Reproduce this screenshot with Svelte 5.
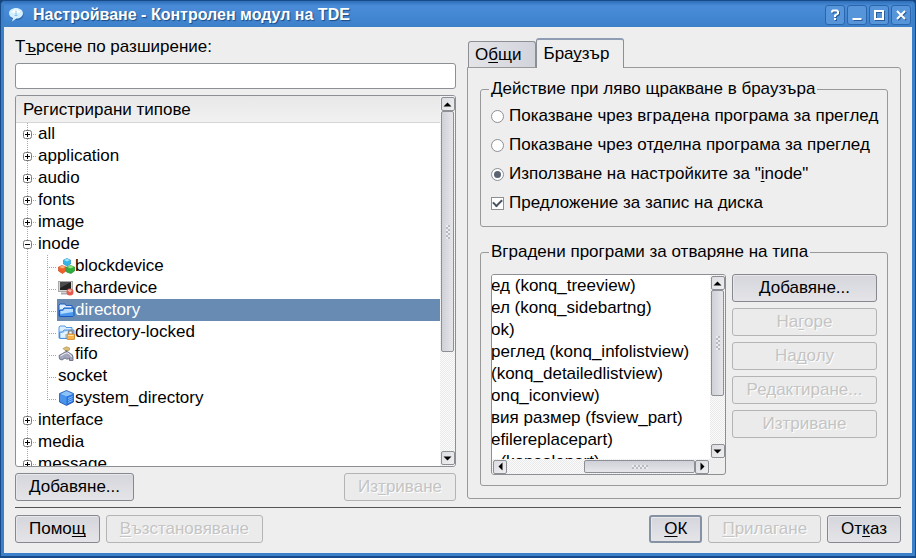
<script>
let search = $state('');
let clickAction = $state('settings');
let askSave = $state(true);
let tab = $state('browser');
let selected = $state('directory');

let groups = $state([
  { name: 'all' },
  { name: 'application' },
  { name: 'audio' },
  { name: 'fonts' },
  { name: 'image' },
  {
    name: 'inode',
    open: true,
    children: [
      { name: 'blockdevice', icon: 'blocks' },
      { name: 'chardevice', icon: 'terminal' },
      { name: 'directory', icon: 'folder' },
      { name: 'directory-locked', icon: 'locked' },
      { name: 'fifo', icon: 'tap' },
      { name: 'socket' },
      { name: 'system_directory', icon: 'cube' }
    ]
  },
  { name: 'interface' },
  { name: 'media' },
  { name: 'message' }
]);

// labels as they read once scrolled to the right
const services = [
  'ед (konq_treeview)',
  'ел (konq_sidebartng)',
  'ok)',
  'реглед (konq_infolistview)',
  '(konq_detailedlistview)',
  'onq_iconview)',
  'вия размер (fsview_part)',
  'efilereplacepart)',
  '  (konsolepart)'
];
</script>

{#snippet icon(name)}
  <svg class="icon" width="17" height="16" viewBox="0 0 17 16" aria-hidden="true">
    {#if name === 'blocks'}
      <path d="M5.500 2 9 .5l3.500 1.500v4L9 8 5.500 6z" fill="#35b5e5" stroke="#1c86b8" stroke-width=".6" />
      <path d="M6 2l3-1.200L12 2 9 3.500z" fill="#9be6fa" />
      <path d="M.5 9 4 7.500 8 9v4l-3.500 2.500L.5 13z" fill="#f0612a" stroke="#c23c12" stroke-width=".6" />
      <path d="M1 9l3.500-1.500L7.500 9 4.500 10.500z" fill="#ffae7a" />
      <path d="M8.500 9l4-1.500L16.500 9v4L13 15.500 8.500 14z" fill="#2fae3c" stroke="#158024" stroke-width=".6" />
      <path d="M9 9l3.500-1.500L16 9l-3.500 1.500z" fill="#8ce27f" />
    {:else if name === 'terminal'}
      <rect x=".5" y="1.500" width="14" height="10" fill="#d6d6d6" stroke="#aaa" />
      <rect x="2" y="2" width="11" height="8" fill="#222" />
      <path d="M2 2h11L2 8z" fill="#4b4b4b" />
      <path d="M3 13.500h7" stroke="#aaa" stroke-width="2" />
      <circle cx="12" cy="12" r="3.500" fill="#e45c4c" />
      <path d="M9.500 10.500q2-2 4.500 0l-2 2z" fill="#f8b4a8" />
    {:else if name === 'folder'}
      <path d="M1 14V3l1-1h5l1 1.500h6V7" fill="#dbeeff" stroke="#1e5fc8" />
      <path d="M1.500 14.500V8h3l1.500-2h10v7.500l-1 1z" fill="#4c98ee" stroke="#1558c0" />
      <path d="M2.500 9H5l1.500-2H15v3L2.500 12z" fill="#b5dbff" />
    {:else if name === 'locked'}
      <path d="M1 14V3l1-1h5l1 1.500h6V7" fill="#dbeeff" stroke="#5598e0" />
      <path d="M1.500 14.500V8h3l1.500-2h10v8.500z" fill="#a9d2fa" stroke="#4a90dc" />
      <path d="M3 9h2.500L7 7.500h7V10H7v3.500H3z" fill="#e5f3ff" />
      <path d="M10.500 10V8.500a2 2 0 0 1 4 0V10" fill="none" stroke="#8c8c8c" stroke-width="1.500" />
      <rect x="9" y="10" width="7.500" height="5.500" rx=".5" fill="#f7b34c" stroke="#c67b18" stroke-width=".7" />
      <path d="M10 11.500h5.500" stroke="#ffe2a8" />
    {:else if name === 'tap'}
      <path d="M5 2.500 8.500.8 11.500 2v2L9 5 7 4.500z" fill="#d9bd78" stroke="#a5873c" stroke-width=".6" />
      <path d="M8.500 4v3" stroke="#8e8570" stroke-width="2" />
      <path d="M1 9.500 4.500 7.500 7 6h3.500l1.500 1.500q3 .5 3 3.500v3.500h-3.500V12q-1 1.500-3 1L7 12l-3 2-2.500-1z" fill="#a3a7bc" stroke="#5d6178" stroke-width=".8" />
      <path d="M2.500 10l3.500-2 2-1h2l1.500 1.500q2 .5 2 2.500" fill="none" stroke="#f2f2fa" />
    {:else if name === 'cube'}
      <path d="M8.500.5l7 3v8.500l-7 3.500L1.500 12V3.500z" fill="#2873dc" stroke="#174e9f" stroke-width=".7" />
      <path d="M8.500 1l6.500 3-6.500 2.500L2 4z" fill="#8cc4fa" />
      <path d="M2 4l6.500 2.500V15L2 11.500z" fill="#4a94ec" />
      <path d="M10 8.500l4.500-2M10 10.500l4.500-2M10 12.500l4.500-2" stroke="#a4d5ff" stroke-width=".8" />
    {/if}
  </svg>
{/snippet}

{#snippet arrow(dir)}
  <button class="arrow" type="button" aria-label={dir} tabindex="-1">
    <svg width="9" height="9" viewBox="0 0 9 9" aria-hidden="true">
      {#if dir === 'up'}
        <path d="M.5 6.500 4.500 2.500 8.500 6.500z" />
      {:else if dir === 'down'}
        <path d="M.5 2.500 4.500 6.500 8.500 2.500z" />
      {:else if dir === 'left'}
        <path d="M6.500.5 2.500 4.500 6.500 8.500z" />
      {:else}
        <path d="M2.500.5 6.500 4.500 2.500 8.500z" />
      {/if}
    </svg>
  </button>
{/snippet}

<div class="window">
  <header class="titlebar">
    <svg class="logo" width="16" height="16" viewBox="0 0 16 16" aria-hidden="true">
      <ellipse cx="8.500" cy="7.500" rx="7" ry="5.500" fill="#17458a" opacity=".5" />
      <path d="M8 1c4 0 7 2.300 7 5.200S12 11.500 8.500 11.500L4 14.500 5 11C2.500 10.300 1 8.500 1 6.200 1 3.300 4 1 8 1z" fill="#d4efff" />
      <path d="M3 5q5-5 10 0-5 2-10 0z" fill="#fff" />
      <path d="M8 3.500v5M6.500 8.500h3" stroke="#8ac0e8" />
    </svg>
    <h1>Настройване - Контролен модул на TDE</h1>
    <div class="window-buttons">
      <button type="button" aria-label="Помощ">
        <svg width="18" height="18" viewBox="0 0 18 18"><path d="M6 6.500V5.500L7 4.500h4l1 1v2L9 9.500V11M9 12v2" /></svg>
      </button>
      <button type="button" aria-label="Минимизиране">
        <svg width="18" height="18" viewBox="0 0 18 18"><path d="M4.500 13h9" /></svg>
      </button>
      <button type="button" aria-label="Максимизиране">
        <svg width="18" height="18" viewBox="0 0 18 18"><path d="M5 5h8v8H5z" /></svg>
      </button>
      <button type="button" aria-label="Затваряне">
        <svg width="18" height="18" viewBox="0 0 18 18"><path d="M5 5l8 8M13 5l-8 8" /></svg>
      </button>
    </div>
  </header>

  <main>
    <div class="columns">
      <section class="types">
        <label for="search">Т<u>ъ</u>рсене по разширение:</label>
        <input id="search" class="search" type="text" bind:value={search} />

        <div class="frame">
          <div class="tree">
            <div class="tree-header">Регистрирани типове</div>
            <ul class="tree-list">
              {#each groups as group}
                <li>
                  <div class="row">
                    <button
                      class="expander"
                      type="button"
                      aria-label={group.name}
                      aria-expanded={!!group.open}
                      onclick={() => (group.open = !group.open)}
                    >
                      <svg width="9" height="9" viewBox="0 0 9 9" aria-hidden="true">
                        <rect x=".5" y=".5" width="8" height="8" rx="2" fill="#fff" stroke="#777" />
                        <path d={group.open ? 'M2 4.500h5' : 'M2 4.500h5M4.500 2v5'} stroke="#000" />
                      </svg>
                    </button>
                    <span>{group.name}</span>
                  </div>
                  {#if group.open && group.children}
                    <ul class="children">
                      {#each group.children as item}
                        <li>
                          <button
                            class="item"
                            class:selected={selected === item.name}
                            type="button"
                            onclick={() => (selected = item.name)}
                          >
                            {#if item.icon}{@render icon(item.icon)}{/if}
                            <span>{item.name}</span>
                          </button>
                        </li>
                      {/each}
                    </ul>
                  {/if}
                </li>
              {/each}
            </ul>
          </div>
          <div class="scroll vertical">
            {@render arrow('up')}
            <div class="track"><div class="thumb long"></div></div>
            {@render arrow('down')}
          </div>
        </div>

        <div class="buttons">
          <button class="btn" type="button">Добавяне...</button>
          <button class="btn end" type="button" disabled>Из<u>т</u>риване</button>
        </div>
      </section>

      <section class="details">
        <div class="tabs" role="tablist">
          <button class="tab" class:active={tab === 'general'} role="tab" aria-selected={tab === 'general'} onclick={() => (tab = 'general')}>О<u>б</u>щи</button>
          <button class="tab" class:active={tab === 'browser'} role="tab" aria-selected={tab === 'browser'} onclick={() => (tab = 'browser')}>Бра<u>у</u>зър</button>
        </div>
        <div class="panel" role="tabpanel">
          <fieldset class="actions">
            <legend>Действие при ляво щракване в браузъра</legend>
            <label><input type="radio" name="action" value="embedded" bind:group={clickAction} />Показване чрез вградена програма за преглед</label>
            <label><input type="radio" name="action" value="separate" bind:group={clickAction} />Показване чрез отделна програма за преглед</label>
            <label><input type="radio" name="action" value="settings" bind:group={clickAction} /><span>Използване на настройките за "<u>i</u>node"</span></label>
            <label><input type="checkbox" bind:checked={askSave} />Предложение за запис на диска</label>
          </fieldset>

          <fieldset class="services">
            <legend>Вградени програми за отваряне на типа</legend>
            <div class="services-body">
              <div class="frame list-frame">
                <ul class="service-list">
                  {#each services as service}
                    <li>{service}</li>
                  {/each}
                </ul>
                <div class="scroll vertical">
                  {@render arrow('up')}
                  <div class="track"><div class="thumb high"></div></div>
                  {@render arrow('down')}
                </div>
                <div class="scroll horizontal">
                  {@render arrow('left')}
                  <div class="track"><div class="thumb wide"></div></div>
                  {@render arrow('right')}
                </div>
              </div>
              <div class="side-buttons">
                <button class="btn" type="button">Добавяне...</button>
                <button class="btn" type="button" disabled>На<u>г</u>оре</button>
                <button class="btn" type="button" disabled>На<u>д</u>олу</button>
                <button class="btn" type="button" disabled>Редактиране...</button>
                <button class="btn" type="button" disabled>Изтриване</button>
              </div>
            </div>
          </fieldset>
        </div>
      </section>
    </div>

    <footer class="buttons">
      <button class="btn" type="button">Помо<u>щ</u></button>
      <button class="btn" type="button" disabled><u>В</u>ъзстановяване</button>
      <button class="btn default end" type="button"><u>О</u>К</button>
      <button class="btn" type="button" disabled><u>П</u>рилагане</button>
      <button class="btn" type="button">От<u>к</u>аз</button>
    </footer>
  </main>
</div>

<style>
:global(body) {
  margin: 0;
  background: #17447c;
}
* {
  box-sizing: border-box;
}
.window {
  display: flex;
  flex-direction: column;
  height: 100vh;
  min-height: 480px;
  padding: 0 3px;
  border: 1px solid #174a88;
  border-bottom-width: 2px;
  border-radius: 5px 5px 0 0;
  background: #3c80ca;
  color: #000;
  font: 17px/20px "Liberation Sans", Arial, sans-serif;
}
button,
input {
  font: inherit;
  color: inherit;
  margin: 0;
}
ul {
  list-style: none;
  margin: 0;
  padding: 0;
}
u {
  text-underline-offset: 2px;
  text-decoration-thickness: 1px;
  text-decoration-skip-ink: none;
}

/* title bar */
.titlebar {
  display: flex;
  align-items: center;
  flex: none;
  height: 26px;
  padding: 2px 1px 0 4px;
  background: linear-gradient(#2f6fb9, #4a8cd8 5px, #3c80ca);
}
.logo {
  flex: none;
}
h1 {
  flex: 1;
  margin: 0 0 0 9px;
  color: #fff;
  font-size: 16px;
  line-height: 20px;
  white-space: nowrap;
  text-shadow: 1px 1px 1px #1c4a80;
}
.window-buttons {
  display: flex;
  gap: 2px;
}
.window-buttons button {
  width: 20px;
  height: 20px;
  padding: 0;
  border: 1px solid #2b66ac;
  border-radius: 3px;
  background: #5695da;
}
.window-buttons svg {
  display: block;
  fill: none;
  stroke: #fff;
  stroke-width: 2;
  filter: drop-shadow(1px 1px 0 #2a5c98);
}

main {
  display: flex;
  flex-direction: column;
  flex: 1;
  min-height: 0;
  padding: 10px 11px;
  margin-bottom: 3px;
  background: #eee;
}
.columns {
  display: flex;
  flex: 1;
  gap: 11px;
  min-height: 0;
  padding-bottom: 6px;
  border-bottom: 1px solid #555;
}

/* left column */
.types {
  display: flex;
  flex-direction: column;
  flex: 441;
  gap: 6px;
  min-width: 0;
}
.search {
  width: 100%;
  height: 26px;
  padding: 2px 4px;
  border: 1px solid #8c8f94;
  border-radius: 3px;
  background: #fff;
}
.frame {
  display: flex;
  flex: 1;
  min-height: 0;
  min-width: 0;
  border: 1px solid #8c8f94;
  border-radius: 3px;
  background: #fff;
  overflow: hidden;
}
.tree {
  flex: 1;
  min-width: 0;
  overflow: hidden;
}
.tree-header {
  height: 27px;
  padding: 4px 7px 0;
  border-bottom: 1px solid #d6d6d6;
  background: linear-gradient(#e8e8e8, #f1f1f1);
}
.tree-list {
  margin-left: 11px;
  background: repeating-linear-gradient(#aaa 0 1px, transparent 1px 2px) 0 0 / 1px 100% no-repeat;
}
.row {
  display: flex;
  align-items: center;
  height: 22px;
  background: repeating-linear-gradient(90deg, #aaa 0 1px, transparent 1px 2px) 0 11px / 10px 1px no-repeat;
}
.expander {
  flex: none;
  width: 9px;
  height: 9px;
  margin: 0 6px 0 -4px;
  padding: 0;
  border: 0;
  background: none;
}
.expander svg {
  display: block;
}
.children {
  margin-left: 20px;
  background: repeating-linear-gradient(#aaa 0 1px, transparent 1px 2px) 0 0 / 1px calc(100% - 10px) no-repeat;
}
.children li {
  padding-left: 10px;
  background: repeating-linear-gradient(90deg, #aaa 0 1px, transparent 1px 2px) 0 12px / 10px 1px no-repeat;
}
.item {
  display: flex;
  align-items: center;
  width: 100%;
  height: 22px;
  padding: 0 1px;
  border: 0;
  background: none;
  text-align: left;
}
.item.selected {
  background: #678bb2;
  color: #fff;
}
.icon {
  flex: none;
}

/* scroll bars */
.scroll {
  display: flex;
  flex: none;
  padding: 1px;
  background: repeating-conic-gradient(#eaeaea 0 25%, #fafafa 0 50%) 0 0 / 2px 2px;
}
.vertical {
  flex-direction: column;
  width: 15px;
}
.arrow {
  display: grid;
  place-items: center;
  align-self: center;
  flex: none;
  width: 14px;
  height: 14px;
  padding: 0;
  border: 1px solid #8c8f94;
  border-radius: 2px;
  background: linear-gradient(135deg, #dcdde2, #f0f0f2);
}
.track {
  display: flex;
  flex: 1;
  min-width: 0;
  min-height: 0;
}
.thumb {
  position: relative;
  width: 100%;
  border: 1px solid #8c8f94;
  border-radius: 2px;
  background: linear-gradient(90deg, #cfd1d8, #e6e6ea);
}
.thumb::after {
  content: "";
  position: absolute;
  inset: 0;
  margin: auto;
  width: 4px;
  height: 14px;
  background: repeating-conic-gradient(#b9bbc2 0 25%, #ececf0 0 50%) 0 0 / 4px 4px;
}
.long {
  height: 71%;
}
.high {
  height: 69%;
}
.wide {
  width: 59%;
  margin-left: auto;
  background: linear-gradient(#cfd1d8, #e6e6ea);
}
.wide::after {
  width: 16px;
  height: 4px;
}

/* buttons */
.buttons {
  display: flex;
  gap: 6px;
}
footer.buttons {
  padding-top: 7px;
}
.end {
  margin-left: auto;
}
.btn {
  height: 28px;
  padding: 0 13px 1px;
  border: 1px solid #85888e;
  border-radius: 3px;
  background: linear-gradient(#d5d6dc, #e4e4e8);
  box-shadow: inset 1px 1px 0 #e8e8ec;
  white-space: nowrap;
}
.btn:disabled {
  border-color: #b4b4b4;
  background: #ebebeb;
  box-shadow: none;
  color: #c4c4c4;
  text-shadow: 1px 1px 0 #fff;
}
.default {
  border: 2px solid #8592a3;
}

/* right column */
.details {
  display: flex;
  flex-direction: column;
  flex: 434;
  min-width: 0;
  padding: 1px 0 2px;
}
.tabs {
  display: flex;
  align-items: flex-end;
  height: 29px;
  padding-left: 1px;
}
.tab {
  height: 26px;
  padding: 0 14px 0 6px;
  border: 1px solid #8c8f94;
  border-bottom: 0;
  border-radius: 3px 3px 0 0;
  background: linear-gradient(90deg, #e4e4e8, #d2d4dc);
}
.tab.active {
  z-index: 1;
  height: 30px;
  margin-bottom: -1px;
  border-top: 2px solid #8f9db4;
  background: #eee;
}
.panel {
  display: flex;
  flex-direction: column;
  flex: 1;
  gap: 15px;
  min-height: 0;
  padding: 11px 12px 12px;
  border: 1px solid #999;
  border-radius: 0 3px 3px 3px;
}
fieldset {
  display: flex;
  flex-direction: column;
  min-width: 0;
  margin: 0;
  border: 1px solid #999;
  border-radius: 3px;
}
legend {
  padding: 0 2px;
}
.actions {
  gap: 9px;
  padding: 7px 8px 13px;
}
.actions label {
  display: flex;
  align-items: center;
  gap: 5px;
  margin-left: 2px;
  white-space: nowrap;
}
.actions input {
  appearance: none;
  display: grid;
  place-items: center;
  flex: none;
  width: 13px;
  height: 13px;
  border: 1px solid #8c8f94;
  background: #fff;
}
.actions input[type="radio"] {
  border-radius: 50%;
}
.actions input[type="radio"]:checked::after {
  content: "";
  width: 7px;
  height: 7px;
  border-radius: 50%;
  background: #5b6470;
}
.actions input[type="checkbox"]:checked::after {
  content: "";
  width: 7px;
  height: 4px;
  margin-bottom: 2px;
  border: solid #47525f;
  border-width: 0 0 2px 2px;
  transform: rotate(-45deg);
}
.services {
  flex: 1;
  min-height: 0;
  padding: 12px 10px 10px 8px;
}
.services-body {
  display: flex;
  flex: 1;
  gap: 6px;
  min-height: 0;
  margin-left: 2px;
}
.list-frame {
  display: grid;
  grid-template: minmax(0, 1fr) 15px / minmax(0, 1fr) 15px;
  background: #eee;
}
.service-list {
  overflow: hidden;
  background: #fff;
}
.service-list li {
  height: 22px;
  line-height: 22px;
  margin-left: -1px;
  white-space: pre;
}
.side-buttons {
  display: flex;
  flex-direction: column;
  gap: 6px;
}
.side-buttons .btn {
  width: 145px;
}
</style>
